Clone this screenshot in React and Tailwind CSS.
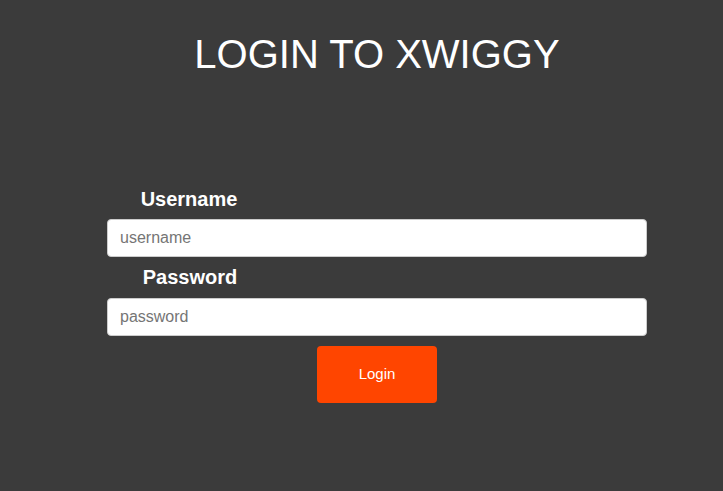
export default function App() {
  return (
    <div className="min-h-[491px] w-full bg-[#3b3b3b] font-['Liberation_Sans',Arial,sans-serif]">
      <div className="ml-[107px] flex w-[540px] flex-col pt-[31px]">
        <h1 className="text-center text-[40px] font-normal leading-[46px] text-white">LOGIN TO XWIGGY</h1>
        <label className="mt-[111px] w-[164px] text-center text-[20px] font-bold leading-[23px] text-white">Username</label>
        <input
          type="text"
          placeholder="username"
          className="mt-[8px] h-[38px] w-full rounded-[4px] border border-[#cccccc] bg-white px-[12px] text-[16px] text-black placeholder:text-[#757575] outline-none"
        />
        <label className="mt-[9px] w-[166px] text-center text-[20px] font-bold leading-[23px] text-white">Password</label>
        <input
          type="password"
          placeholder="password"
          className="mt-[9px] h-[38px] w-full rounded-[4px] border border-[#cccccc] bg-white px-[12px] text-[16px] text-black placeholder:text-[#757575] outline-none"
        />
        <div className="mt-[10px] flex justify-center">
          <button className="h-[57px] w-[120px] rounded-[4px] bg-[#ff4500] text-[15px] text-white">Login</button>
        </div>
      </div>
    </div>
  );
}
